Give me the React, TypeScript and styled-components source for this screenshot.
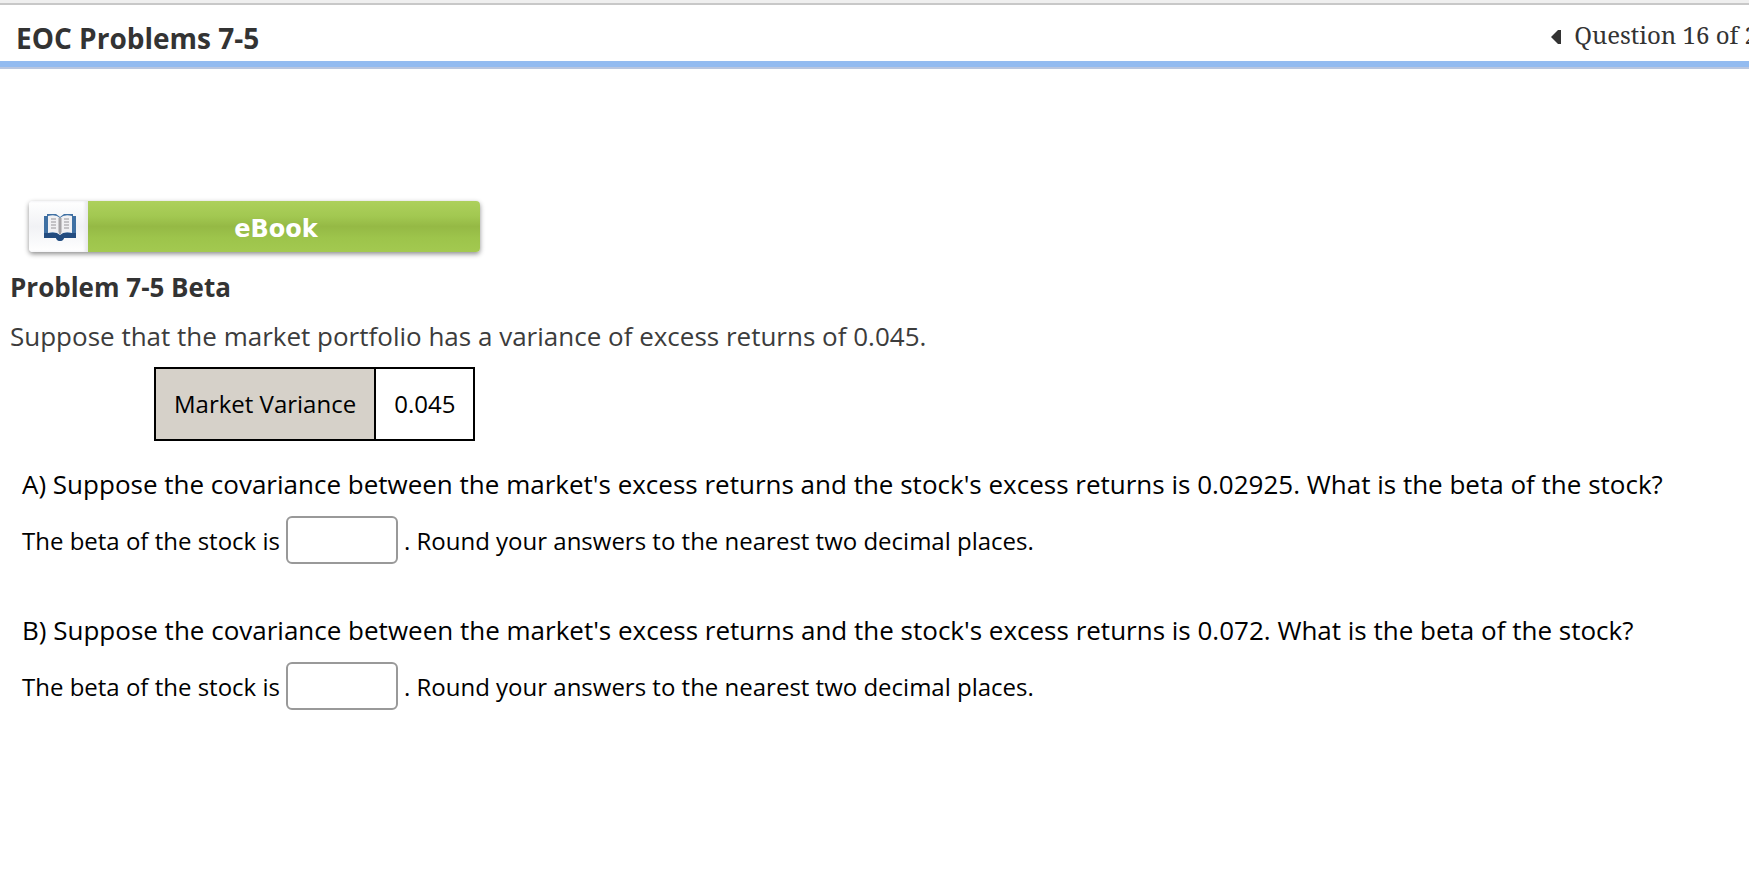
import React from "react";
import styled, { createGlobalStyle } from "styled-components";

const GlobalStyle = createGlobalStyle`
  *, *::before, *::after { box-sizing: border-box; }
  body {
    margin: 0;
    background: #fff;
    color: #000;
    font-family: "Open Sans", "Noto Sans", sans-serif;
    overflow-x: hidden;
  }
`;

const Header = styled.header`
  border-top: 3px solid #efefef;
  overflow: hidden;
`;

const HeaderBar = styled.div`
  display: flex;
  justify-content: space-between;
  align-items: flex-start;
  padding: 13px 0 2px 16px;
  border-top: 2px solid #c8c8c8;
  white-space: nowrap;
`;

const HeaderRule = styled.div`
  height: 8px;
  background: #93bbf0;
  border-bottom: 2px solid #b9c6df;
`;

const Title = styled.h1`
  margin: 0;
  font-size: 28px;
  line-height: 41px;
  font-weight: 700;
  color: #333;
`;

const Pager = styled.nav`
  display: flex;
  align-items: center;
  gap: 13px;
  margin-right: -9px;
  font-family: "Noto Serif", "DejaVu Serif", serif;
  font-size: 24px;
  line-height: 34px;
  color: #333;
`;

const PreviousButton = styled.button`
  display: flex;
  padding: 4px 0 0;
  border: 0;
  background: none;
  cursor: pointer;
`;

const Main = styled.main`
  padding: 132px 10px 40px;
`;

const EBookButton = styled.button`
  display: flex;
  align-items: stretch;
  width: 451px;
  max-width: 100%;
  height: 51px;
  margin-left: 19px;
  padding: 0;
  border: 0;
  border-radius: 4px;
  overflow: hidden;
  background: #fff;
  box-shadow: 0 2px 5px rgba(0, 0, 0, 0.45);
  cursor: pointer;
`;

const EBookIcon = styled.span`
  display: flex;
  align-items: center;
  justify-content: center;
  width: 59px;
  padding-left: 2px;
  background: linear-gradient(#fff, #f1f2f5 50%, #fff);
  box-shadow: inset -3px 0 3px #e9e9ee;
`;

const EBookLabel = styled.span`
  flex: 1;
  padding: 3px 16px 0 0;
  background: linear-gradient(#add05c, #a2c851 30%, #95b945 50%, #9dc44b 72%, #a3c950);
  font-family: "DejaVu Sans", sans-serif;
  font-size: 24px;
  line-height: 51px;
  font-weight: 700;
  text-align: center;
  color: #fff;
`;

const Heading = styled.h2`
  margin: 15px 0 0;
  font-size: 26px;
  line-height: 40px;
  font-weight: 700;
  color: #333;
`;

const Intro = styled.p`
  margin: 9px 0 0;
  font-size: 26px;
  line-height: 40px;
  color: #3c3c3c;
`;

const VarianceTable = styled.table`
  margin: 11px 0 0 144px;
  border-collapse: collapse;
  font-size: 24px;
  line-height: 32px;

  th, td {
    height: 72px;
    padding: 0 18px;
    border: 2px solid #000;
    font-weight: 400;
    text-align: left;
    white-space: nowrap;
  }

  th { background: #d6d1c9; }
`;

const Question = styled.section`
  margin: 23px 0 46px 12px;
`;

const Prompt = styled.p`
  margin: 0;
  font-size: 26px;
  line-height: 40px;
`;

const AnswerRow = styled.div`
  display: flex;
  align-items: center;
  gap: 6px;
  margin-top: 12px;
  font-size: 24px;
  line-height: 46px;

  label, span { padding-top: 2px; }
`;

const AnswerInput = styled.input`
  width: 112px;
  height: 48px;
  padding: 0 10px;
  border: 2px solid #999;
  border-radius: 6px;
  background: #fff;
  font: inherit;
`;

function BookIcon() {
  return (
    <svg width="34" height="28" viewBox="0 0 34 28" aria-hidden="true">
      <path d="M1 3H4V1H13L17 4L21 1H30V3H33V25H21Q20 28 17 28T13 25H1Z" fill="#3f70a3" />
      <path d="M1 20H33V25H21Q20 28 17 28T13 25H1Z" fill="#234c7f" />
      <path d="M5 3Q13 1 17 5Q21 1 29 3V20Q21 18 17 22Q13 18 5 20Z" fill="#f1f1f3" />
      <path d="M15 5H19V19L17 21L15 19Z" fill="#c9c8ca" />
      <path d="M8 6H13M8 9H13M8 12H13M8 15H13M21 6H26M21 9H26M21 12H26M21 15H26" stroke="#b5b4b8" strokeWidth="1.5" />
      <path d="M17 5V21" stroke="#99979a" strokeWidth="1.5" />
    </svg>
  );
}

const questions = [
  { id: "a", label: "A", covariance: "0.02925" },
  { id: "b", label: "B", covariance: "0.072" },
];

export default function App() {
  return (
    <>
      <GlobalStyle />
      <Header>
        <HeaderBar>
          <Title>EOC Problems 7-5</Title>
          <Pager aria-label="Questions">
            <PreviousButton aria-label="Previous question">
              <svg width="10" height="14" viewBox="0 0 10 14" aria-hidden="true">
                <path d="M0 7L7 0H10V14H7Z" fill="#333" />
              </svg>
            </PreviousButton>
            <span>Question 16 of 2</span>
          </Pager>
        </HeaderBar>
        <HeaderRule />
      </Header>
      <Main>
        <EBookButton>
          <EBookIcon><BookIcon /></EBookIcon>
          <EBookLabel>eBook</EBookLabel>
        </EBookButton>
        <Heading>Problem 7-5 Beta</Heading>
        <Intro>Suppose that the market portfolio has a variance of excess returns of 0.045.</Intro>
        <VarianceTable>
          <tbody>
            <tr>
              <th scope="row">Market Variance</th>
              <td>0.045</td>
            </tr>
          </tbody>
        </VarianceTable>
        {questions.map(({ id, label, covariance }) => (
          <Question key={id}>
            <Prompt>
              {`${label}) Suppose the covariance between the market's excess returns and the stock's excess returns is ${covariance}. What is the beta of the stock?`}
            </Prompt>
            <AnswerRow>
              <label htmlFor={`beta-${id}`}>The beta of the stock is</label>
              <AnswerInput id={`beta-${id}`} type="text" />
              <span>. Round your answers to the nearest two decimal places.</span>
            </AnswerRow>
          </Question>
        ))}
      </Main>
    </>
  );
}
